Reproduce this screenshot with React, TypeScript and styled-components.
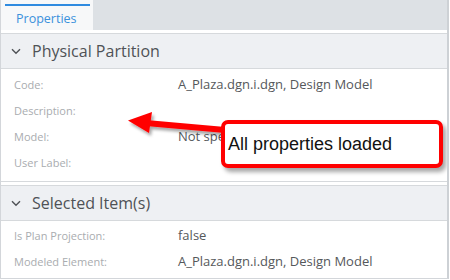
import React from 'react';
import styled, { createGlobalStyle } from 'styled-components';

const GlobalStyle = createGlobalStyle`
  html, body {
    margin: 0;
    padding: 0;
    background: #ffffff;
  }
  body {
    font-family: "Open Sans", "Noto Sans", sans-serif;
  }
`;

const Panel = styled.div`
  position: relative;
  width: 446px;
  height: 278px;
  border-left: 1px solid #d3d6da;
  border-right: 2px solid #cdd1d5;
  border-bottom: 1px solid #d3d6da;
  background: #ffffff;
  overflow: hidden;
`;

const TabBar = styled.div`
  display: flex;
  height: 30px;
  background: #dde1e5;
`;

const Tab = styled.div`
  width: 85px;
  padding: 4px 3px 0 4px;
  background: #f7f8f9;
`;

const TabLabel = styled.div`
  border-top: 2px solid #2f8be0;
  height: 24px;
  padding-left: 11px;
  display: flex;
  align-items: center;
  font-size: 12.5px;
  color: #3b91dc;
`;

const Section = styled.section<{ $gap: number }>`
  margin-top: ${(p) => p.$gap}px;
  border-top: 1px solid #d6d9dc;
`;

const Header = styled.div`
  display: flex;
  align-items: center;
  gap: 11px;
  height: 34px;
  padding-left: 10px;
  background: #eef0f3;
  border-bottom: 1px solid #d6d9dc;
  font-size: 16px;
  color: #4f5256;
`;

const Body = styled.div<{ $top: number; $bottom: number; $line: boolean }>`
  padding: ${(p) => p.$top}px 0 ${(p) => p.$bottom}px;
  border-bottom: ${(p) => (p.$line ? '1px solid #d6d9dc' : 'none')};
`;

const Row = styled.div`
  display: grid;
  grid-template-columns: 164px 1fr;
  align-items: center;
  height: 26px;
  padding-left: 13px;
`;

const Label = styled.span`
  font-size: 11px;
  color: #a9acaf;
`;

const Value = styled.span`
  font-size: 13px;
  color: #55585b;
  white-space: nowrap;
`;

const Callout = styled.div`
  position: absolute;
  left: 220px;
  top: 120px;
  width: 211px;
  height: 40px;
  border: 4px solid #ff0000;
  border-radius: 7px;
  background: #ffffff;
  box-shadow: 3px 4px 4px rgba(0, 0, 0, 0.35);
  display: flex;
  align-items: center;
  padding-left: 3px;
  box-sizing: content-box;
  font-family: "Liberation Sans", Arial, sans-serif;
  font-size: 18px;
  color: #111111;
`;

const ArrowSvg = styled.svg`
  position: absolute;
  left: 0;
  top: 0;
  pointer-events: none;
`;

const Chevron = () => (
  <svg width="10" height="7" viewBox="0 0 10 7">
    <path d="M1 1.2 L5 5.2 L9 1.2" fill="none" stroke="#4f5256" strokeWidth="1.4" />
  </svg>
);

type Prop = { label: string; value?: string };

const physical: Prop[] = [
  { label: 'Code:', value: 'A_Plaza.dgn.i.dgn, Design Model' },
  { label: 'Description:' },
  { label: 'Model:', value: 'Not specified' },
  { label: 'User Label:' },
];

const selected: Prop[] = [
  { label: 'Is Plan Projection:', value: 'false' },
  { label: 'Modeled Element:', value: 'A_Plaza.dgn.i.dgn, Design Model' },
];

const App: React.FC = () => (
  <>
    <GlobalStyle />
    <Panel>
      <TabBar>
        <Tab>
          <TabLabel>Properties</TabLabel>
        </Tab>
      </TabBar>

      <Section $gap={3}>
        <Header>
          <Chevron />
          Physical Partition
        </Header>
        <Body $top={2} $bottom={6} $line>
          {physical.map((p) => (
            <Row key={p.label}>
              <Label>{p.label}</Label>
              <Value>{p.value}</Value>
            </Row>
          ))}
        </Body>
      </Section>

      <Section $gap={3}>
        <Header>
          <Chevron />
          Selected Item(s)
        </Header>
        <Body $top={1} $bottom={0} $line={false}>
          {selected.map((p) => (
            <Row key={p.label}>
              <Label>{p.label}</Label>
              <Value>{p.value}</Value>
            </Row>
          ))}
        </Body>
      </Section>

      <ArrowSvg width="446" height="278" viewBox="0 0 446 278">
        <defs>
          <filter id="arrowShadow" x="-20%" y="-40%" width="140%" height="180%">
            <feDropShadow dx="2" dy="3" stdDeviation="1.6" floodColor="#000" floodOpacity="0.35" />
          </filter>
        </defs>
        <g filter="url(#arrowShadow)" fill="#ff0000">
          <line x1="145" y1="123" x2="224" y2="130" stroke="#ff0000" strokeWidth="6" />
          <polygon points="127,120.5 151,112 148,133" />
        </g>
      </ArrowSvg>

      <Callout>All properties loaded</Callout>
    </Panel>
  </>
);

export default App;
